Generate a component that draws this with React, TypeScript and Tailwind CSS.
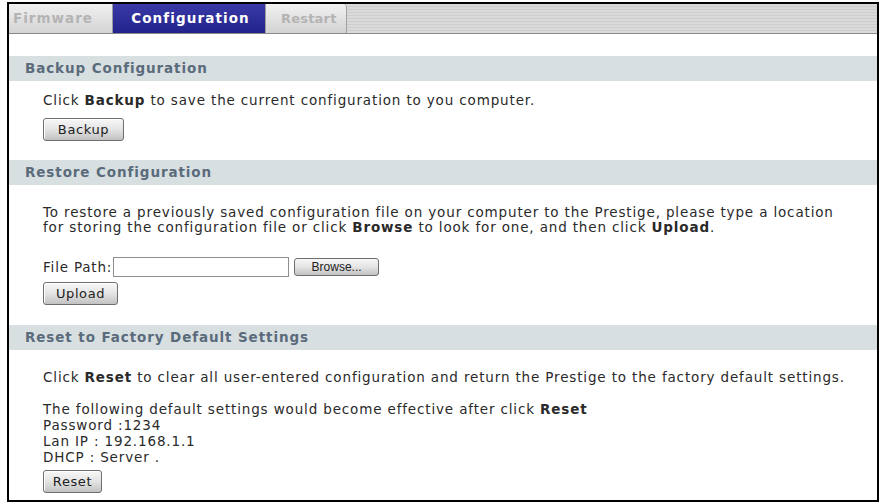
import React from 'react'

const font = { fontFamily: '"DejaVu Sans", Verdana, sans-serif' }

const Btn = ({ label, w }: { label: string; w: string }) => (
  <button
    className={`${w} h-[23px] rounded-[3px] border border-[#6e6e6e] bg-gradient-to-b from-[#f7f7f7] via-[#e4e4e4] to-[#c2c2c2] text-[13px] tracking-[0.6px] leading-none text-[#222] shadow-[inset_1px_1px_0_#fff]`}
  >
    {label}
  </button>
)

const SectionHeader = ({ title }: { title: string }) => (
  <div className="h-[25px] shrink-0 bg-[#d8dfe1] pl-4 flex items-center text-[13.5px] tracking-[0.9px] font-bold text-[#5a6b7c]">
    {title}
  </div>
)

export default function App() {
  return (
    <div className="w-[881px] h-[504px] bg-white overflow-hidden pt-[2px] pl-[7px]" style={font}>
      <div className="w-[872px] h-[500px] border-2 border-black flex flex-col overflow-hidden">
        {/* Tabs */}
        <div className="h-[30px] shrink-0 flex border-b border-[#8a8a8a] bg-[repeating-linear-gradient(180deg,#dadada_0px,#dadada_2px,#cdcdcd_2px,#cdcdcd_3px)]">
          <div className="w-[104px] flex items-center pl-1 bg-gradient-to-b from-[#f0f0f0] to-[#d4d4d4] border-r border-[#9a9a9a] text-[13.5px] tracking-[1px] font-bold text-[#b4b4b4]">
            Firmware
          </div>
          <div className="w-[155px] flex items-center justify-center bg-gradient-to-b from-[#3a3aa8] to-[#22228a] text-[13.5px] tracking-[1.1px] font-bold text-white">
            Configuration
          </div>
          <div className="w-[82px] ml-[-3px] flex items-center pl-[15px] bg-gradient-to-b from-[#f2f2f2] to-[#d2d2d2] border-x border-[#a0a0a0] rounded-tr-[4px] text-[13px] tracking-[0.2px] font-bold text-[#b4b4b4]">
            Restart
          </div>
        </div>

        <div className="h-[22px] shrink-0" />

        {/* Backup */}
        <SectionHeader title="Backup Configuration" />
        <div className="pl-[34px] pt-[11px] pb-[19px] text-[13.5px] tracking-[0.85px] leading-[16px] text-[#2a2a2a]">
          <p>
            Click <b>Backup</b> to save the current configuration to you computer.
          </p>
          <div className="mt-[10px] h-[23px] flex">
            <Btn label="Backup" w="w-[81px]" />
          </div>
        </div>

        {/* Restore */}
        <SectionHeader title="Restore Configuration" />
        <div className="pl-[34px] pt-[20px] pb-[20px] text-[13.5px] tracking-[0.85px] leading-[15px] text-[#2a2a2a]">
          <p>
            To restore a previously saved configuration file on your computer to the Prestige, please type a location
            <br />
            for storing the configuration file or click <b>Browse</b> to look for one, and then click <b>Upload</b>.
          </p>
          <div className="mt-[22px] flex items-center h-[20px]">
            <span className="tracking-[0.8px]">File Path:</span>
            <input className="ml-[1px] w-[176px] h-[20px] border border-[#8e8e8e] bg-white outline-none" />
            <button
              className="ml-[5px] w-[85px] h-[18px] rounded-[3px] border border-[#6e6e6e] bg-gradient-to-b from-[#f7f7f7] via-[#e4e4e4] to-[#c2c2c2] text-[12px] tracking-normal leading-none text-[#222]"
              style={{ fontFamily: '"Liberation Sans", Arial, sans-serif' }}
            >
              Browse...
            </button>
          </div>
          <div className="mt-[5px] h-[23px] flex">
            <Btn label="Upload" w="w-[75px]" />
          </div>
        </div>

        {/* Reset */}
        <SectionHeader title="Reset to Factory Default Settings" />
        <div className="pl-[34px] pt-[19px] text-[13.5px] tracking-[0.85px] leading-[16px] text-[#2a2a2a]">
          <p>
            Click <b>Reset</b> to clear all user-entered configuration and return the Prestige to the factory default settings.
          </p>
          <p className="mt-[16px]">
            The following default settings would become effective after click <b>Reset</b>
          </p>
          <p>Password :1234</p>
          <p>Lan IP : 192.168.1.1</p>
          <p>DHCP : Server .</p>
          <div className="mt-[5px] h-[23px] flex">
            <Btn label="Reset" w="w-[59px]" />
          </div>
        </div>
      </div>
    </div>
  )
}
